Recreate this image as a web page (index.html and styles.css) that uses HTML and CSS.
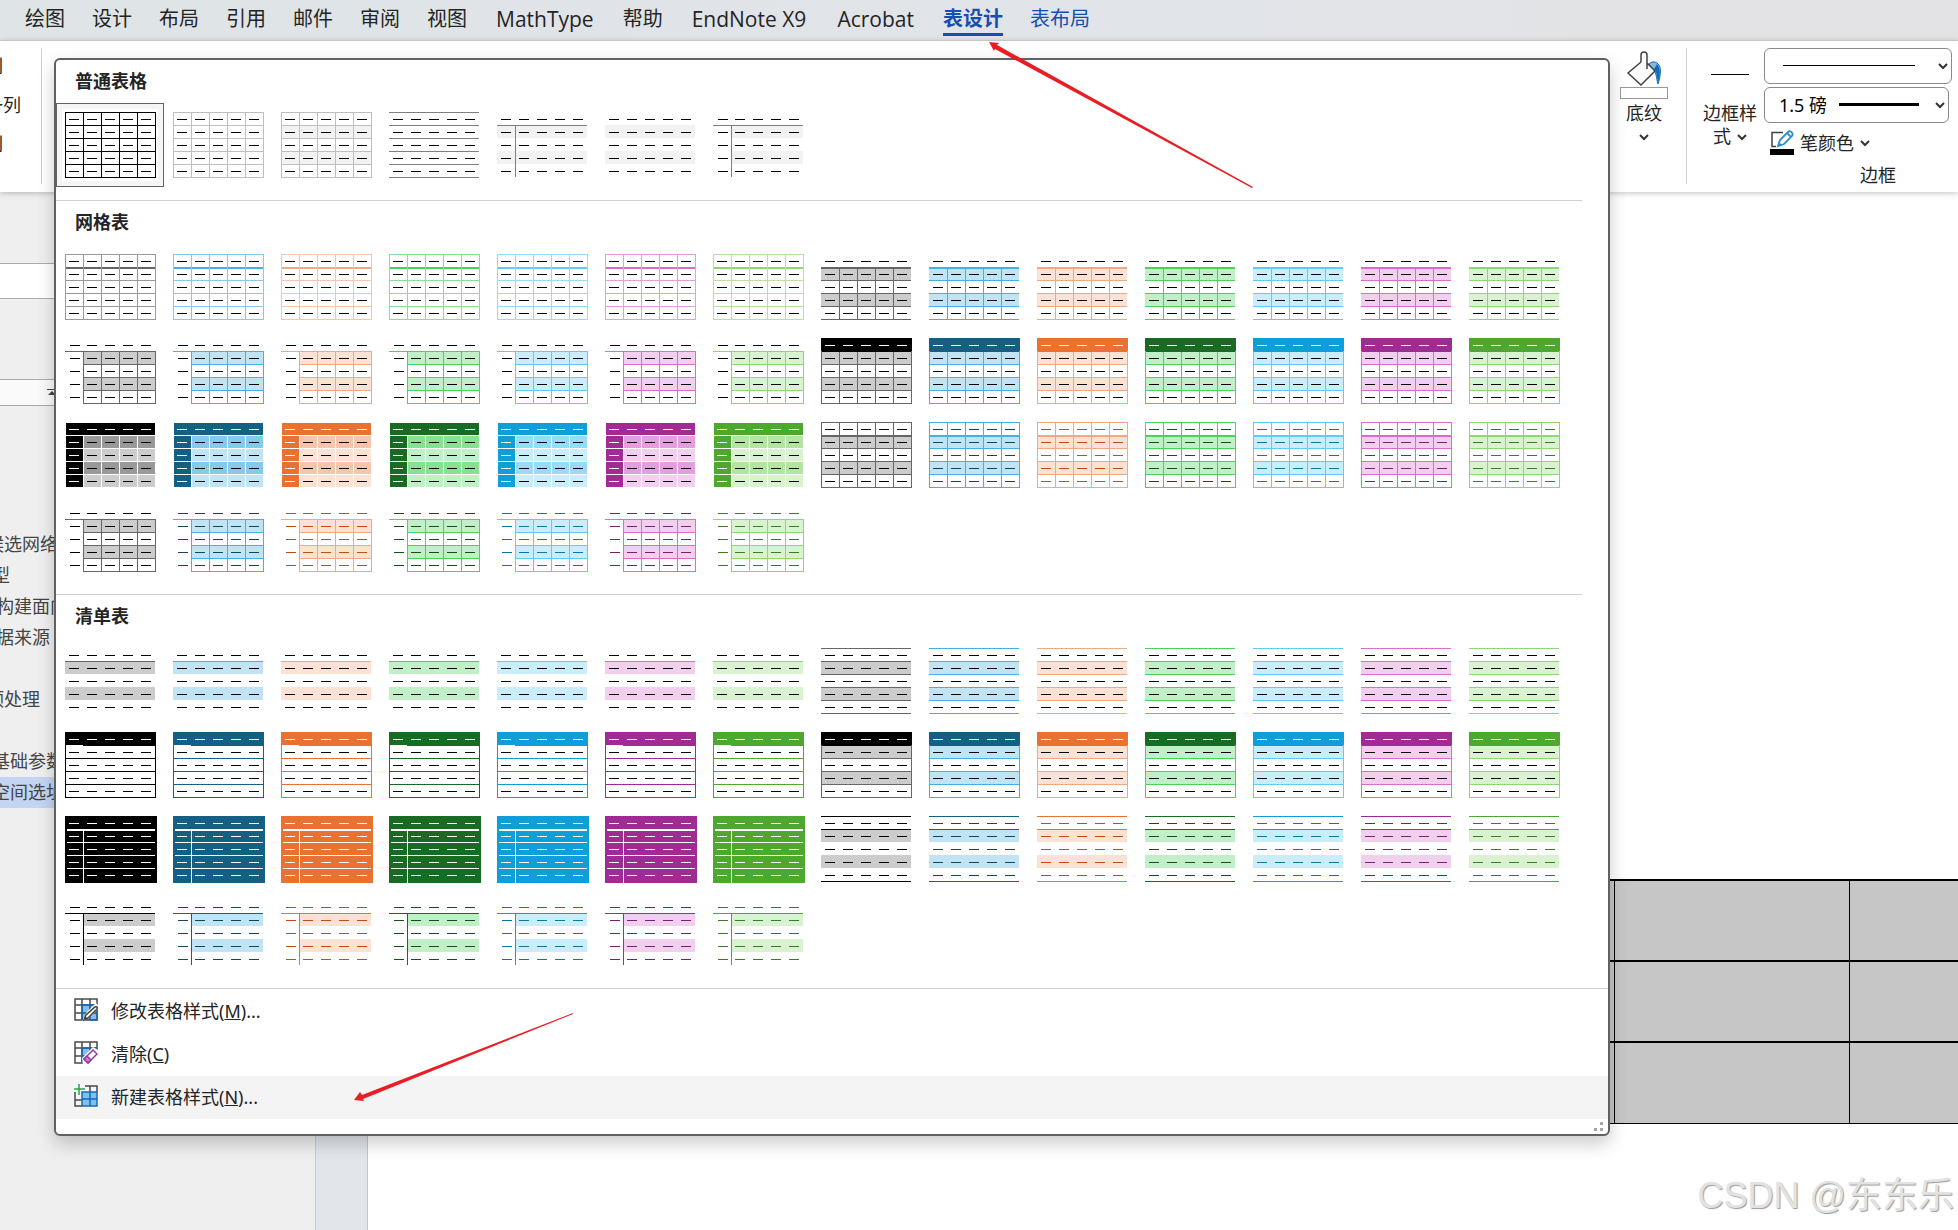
FILE: index.html
```html
<!DOCTYPE html>
<html lang="zh-CN">
<head>
    <meta charset="UTF-8">
    <meta name="viewport" content="width=device-width, initial-scale=1.0">
    <title>表设计</title>
    <link rel="stylesheet" href="styles.css">
</head>
<body>
    <nav class="tabs">
        <a href="#">绘图</a>
        <a href="#">设计</a>
        <a href="#">布局</a>
        <a href="#">引用</a>
        <a href="#">邮件</a>
        <a href="#">审阅</a>
        <a href="#">视图</a>
        <a href="#" class="latin">MathType</a>
        <a href="#">帮助</a>
        <a href="#" class="latin">EndNote X9</a>
        <a href="#" class="latin">Acrobat</a>
        <a href="#" class="context active">表设计</a>
        <a href="#" class="context">表布局</a>
    </nav>

    <header class="ribbon">
        <div class="options">
            <span>列</span>
            <span>一列</span>
            <span>列</span>
        </div>
        <div class="divider"></div>

        <button class="tool shading">
            <svg width="36" height="36" viewBox="0 0 36 36" fill="none">
                <path d="M23 13c4-4 9-2 11 3 1 5 0 11-2 17-2-6-1-11-5-14z" fill="#83b9ea" stroke="#1567b5" stroke-width="1"/>
                <path d="M31 13c4 4 3 12 1 19-1-6-1-11-4-14z" fill="#0f6cbd"/>
                <path d="M15 11 2 22 15 34 29 20 21 12V4a3 3 0 0 0-6 0v7M21 12v6" fill="#fafafa" stroke="#424242" stroke-width="1.500"/>
            </svg>
            <span class="swatch"></span>
            <span>底纹</span>
            <svg class="chevron" width="10" height="8" viewBox="0 0 10 8"><path d="M1 2l4 4 4-4"/></svg>
        </button>
        <div class="divider"></div>

        <button class="tool border-style">
            <span class="line"></span>
            <span>边框样</span>
            <span class="with-chevron">式
                <svg class="chevron" width="10" height="8" viewBox="0 0 10 8"><path d="M1 2l4 4 4-4"/></svg>
            </span>
        </button>

        <div class="border-group">
            <div class="combo">
                <select class="line-type" aria-label="边框线型"><option></option></select>
                <svg class="chevron" width="10" height="8" viewBox="0 0 10 8"><path d="M1 2l4 4 4-4"/></svg>
            </div>
            <div class="combo narrow">
                <select class="line-weight" aria-label="边框粗细"><option>1.5 磅</option></select>
                <svg class="chevron" width="10" height="8" viewBox="0 0 10 8"><path d="M1 2l4 4 4-4"/></svg>
            </div>
            <button class="pen">
                <svg width="24" height="25" viewBox="0 0 24 25" fill="none">
                    <path d="M13 2.500H2v14h4" stroke="#424242" stroke-width="1.500"/>
                    <path d="M8 16l2-6 8-8c2-2 6 1 4 4l-8 8zM17 3l4 4" fill="#fff" stroke="#2b8fd6" stroke-width="1.800"/>
                    <path d="M8 16l1-4 3 3z" fill="#2b8fd6"/>
                    <path d="M0 19h24v6H0z" fill="#000"/>
                </svg>
                笔颜色
                <svg class="chevron" width="10" height="8" viewBox="0 0 10 8"><path d="M1 2l4 4 4-4"/></svg>
            </button>
            <div class="group-name">边框</div>
        </div>
    </header>

    <main class="workspace">
        <aside class="outline">
            <input class="search" type="text" aria-label="搜索文档">
            <button class="jump" aria-label="跳到顶部">
                <svg width="10" height="8" viewBox="0 0 10 8"><path d="M0 0h10v1H0zM5 2l4 4H1z" fill="#444"/></svg>
            </button>
            <ul class="headings">
                <li><a href="#">候选网络</a></li>
                <li class="level-2"><a href="#">型</a></li>
                <li class="level-3"><a href="#">构建面向</a></li>
                <li class="level-3"><a href="#">据来源</a></li>
                <li></li>
                <li><a href="#">预处理</a></li>
                <li></li>
                <li class="level-2"><a href="#">基础参数</a></li>
                <li class="level-2 current"><a href="#">空间选址</a></li>
            </ul>
        </aside>
        <section class="page">
            <table class="doc-table">
                <tr><td></td><td></td><td></td><td></td><td></td><td></td><td></td></tr>
                <tr><td></td><td></td><td></td><td></td><td></td><td></td><td></td></tr>
                <tr><td></td><td></td><td></td><td></td><td></td><td></td><td></td></tr>
            </table>
        </section>
    </main>

    <div class="gallery">
        <section class="group">
            <h2>普通表格</h2>
            <div class="thumbs" id="plain"></div>
        </section>
        <section class="group">
            <h2>网格表</h2>
            <div class="thumbs" id="grid"></div>
        </section>
        <section class="group">
            <h2>清单表</h2>
            <div class="thumbs" id="list"></div>
        </section>
        <div class="menu">
            <button>
                <svg width="24" height="24" viewBox="0 0 24 24" fill="none">
                    <path d="M8 7h14v15H8z" fill="#83beec"/>
                    <path d="M1 1h22v21H1zM1 7h22M1 15h22M8 1v21M16 1v21" stroke="#4a4a4a" stroke-width="1.500"/>
                    <path d="M8 22V7h15M16 22h7V12" stroke="#0f6cbd" stroke-width="1.500"/>
                    <path d="M8 24 12 15 22 5l4 4L15 20z" fill="#fff"/>
                    <path d="M10 22l2-5 9-8c2-1 3 1 2 2l-9 9z" fill="#fff" stroke="#424242" stroke-width="1.500"/>
                    <path d="M10 22l1-4 3 3z" fill="#424242"/>
                </svg>
                <span>修改表格样式(<u>M</u>)...</span>
            </button>
            <button>
                <svg width="24" height="24" viewBox="0 0 24 24" fill="none">
                    <path d="M8 7h14v15H8z" fill="#83beec"/>
                    <path d="M1 1h22v21H1zM1 7h22M1 15h22M8 1v21M16 1v21" stroke="#4a4a4a" stroke-width="1.500"/>
                    <path d="M8 22V7h15" stroke="#0f6cbd" stroke-width="1.500"/>
                    <path d="M8 17 19 6l5 3v15H9z" fill="#fff"/>
                    <path d="M10 18l9-9 4 4-9 9z" fill="#fff" stroke="#9a35a5" stroke-width="1.500"/>
                    <path d="M10 18l3-3 4 4-3 3z" fill="#c583cc" stroke="#9a35a5" stroke-width="1.500"/>
                </svg>
                <span>清除(<u>C</u>)</span>
            </button>
            <button class="hover">
                <svg width="24" height="24" viewBox="0 0 24 24" fill="none">
                    <path d="M11 2h12v6M1 8v14h7M1 16h7M16 2v6" stroke="#4a4a4a" stroke-width="1.500"/>
                    <path d="M8 8h15v14H8zM8 15h15M16 8v14" fill="#83beec" stroke="#0f6cbd" stroke-width="1.500"/>
                    <path d="M5 0v11M0 5h11" stroke="#2f9e4f" stroke-width="1.500"/>
                </svg>
                <span>新建表格样式(<u>N</u>)...</span>
            </button>
        </div>
        <div class="grip">
            <svg width="9" height="9" viewBox="0 0 9 9"><path d="M6 0h3v3H6zM0 6h3v3H0zM6 6h3v3H6z" fill="#a6a6a6"/></svg>
        </div>
    </div>

    <svg class="arrows" width="1260" height="1110" viewBox="0 0 1260 1110" fill="#ec1c24">
        <path d="M989 42 999 43 997 45 1253 187 1252 188 995 49 994 51z"/>
        <path d="M354 1100 360 1092 362 1095 573 1013 573 1014 363 1099 364 1101z"/>
    </svg>

    <div class="watermark">CSDN @东东乐</div>

    <script src="script.js"></script>
</body>
</html>
```
FILE: styles.css
```css
* {
    box-sizing: border-box;
}

body {
    margin: 0;
    min-height: 100vh;
    display: flex;
    flex-direction: column;
    position: relative;
    overflow: hidden;
    font-family: "Noto Sans", "Noto Sans CJK SC", sans-serif;
    font-size: 18px;
    color: #242424;
    background: #fff;
}

a {
    color: inherit;
    text-decoration: none;
}

button {
    font: inherit;
    color: inherit;
    background: none;
    border: none;
    padding: 0;
    cursor: pointer;
}

svg {
    display: block;
    flex: none;
}

.chevron path {
    fill: none;
    stroke: #333;
    stroke-width: 2;
}

/* tab strip */
.tabs {
    display: flex;
    gap: 27px;
    height: 41px;
    padding-left: 25px;
    background: linear-gradient(90deg, #dfe4e7, #e1e4e9 60%, #e3e3e5 85%);
    border-bottom: 1px solid #d4d6d9;
    font-size: 20px;
    line-height: 38px;
    white-space: nowrap;
}

.tabs a {
    height: 36px;
}

.tabs .latin {
    font-family: "Open Sans", sans-serif;
    font-size: 21px;
    padding: 0 2px;
}

.tabs .context {
    color: #174fae;
}

.tabs .active {
    font-weight: bold;
    border-bottom: 3px solid #174fae;
}

/* ribbon */
.ribbon {
    display: flex;
    height: 151px;
    padding: 7px 6px 0 0;
    background: #fff;
    box-shadow: 0 1px 6px rgba(0, 0, 0, 0.25);
    position: relative;
    line-height: 24px;
}

.options {
    display: flex;
    flex-direction: column;
    gap: 15px;
    width: 41px;
    padding-top: 6px;
    text-indent: -15px;
    white-space: nowrap;
}

.divider {
    width: 1px;
    height: 136px;
    background: #d1d1d1;
}

.tool {
    display: flex;
    flex-direction: column;
    align-items: center;
    align-self: flex-start;
}

.shading {
    margin-left: auto;
    margin-right: 18px;
    padding-top: 3px;
}

.swatch {
    width: 48px;
    height: 12px;
    margin-bottom: 2px;
    border: 1px solid #999;
}

.shading .chevron {
    margin-top: 8px;
}

.border-style {
    width: 77px;
    padding: 26px 0 0 9px;
    line-height: 23px;
}

.border-style .line {
    width: 38px;
    height: 1px;
    margin-bottom: 27px;
    background: #000;
}

.with-chevron {
    display: flex;
    align-items: center;
    gap: 6px;
}

.border-group {
    width: 188px;
}

.combo {
    position: relative;
    height: 36px;
    margin-bottom: 3px;
}

.narrow {
    margin-right: 3px;
}

.combo select {
    width: 100%;
    height: 100%;
    appearance: none;
    border: 1px solid #8a8a8a;
    border-radius: 6px;
    padding: 0 14px;
    font: inherit;
    color: #000;
}

.line-type {
    background: linear-gradient(#000, #000) no-repeat 18px 16px / 132px 1px #fff;
}

.line-weight {
    background: linear-gradient(#000, #000) no-repeat 74px 15px / 80px 3px #fff;
}

.combo .chevron {
    position: absolute;
    right: 4px;
    top: 14px;
    pointer-events: none;
}

.pen {
    display: flex;
    align-items: center;
    gap: 6px;
    padding: 3px 0 0 6px;
    height: 30px;
}

.group-name {
    margin-top: 7px;
    padding-left: 96px;
}

/* document area */
.workspace {
    display: flex;
    flex: 1;
    background: #e2e6eb;
}

.outline {
    width: 316px;
    padding-top: 71px;
    background: #efefef;
    border-right: 1px solid #c9cbce;
    overflow: hidden;
}

.search {
    display: block;
    width: 100%;
    height: 36px;
    border: 1px solid #ababab;
    border-width: 1px 0;
    background: #fff;
}

.jump {
    display: flex;
    align-items: center;
    width: 100%;
    height: 27px;
    margin-top: 80px;
    padding-left: 47px;
    background: #fafafa;
    border: 1px solid #ababab;
    border-width: 1px 0;
}

.headings {
    list-style: none;
    margin: 123px 0 0;
    padding: 0;
    line-height: 31px;
    color: #444;
}

.headings li {
    height: 31px;
    text-indent: -14px;
}

.headings .level-2 {
    text-indent: -8px;
}

.headings .level-3 {
    text-indent: -4px;
}

.headings .current {
    background: #c3d5f2;
}

.page {
    flex: 1;
    margin-left: 51px;
    padding: 687px 0 0 71px;
    background: #fff;
    border-left: 1px solid #c4c6c9;
    overflow: hidden;
}

.doc-table {
    width: 100%;
    table-layout: fixed;
    border-collapse: collapse;
    border-bottom: 1px solid #000;
}

.doc-table td {
    width: 235px;
    height: 81px;
    padding: 0;
    background: #c6c6c6;
    border-left: 1px solid #000;
    border-top: 2px solid #000;
}

.doc-table td:last-child {
    width: auto;
}

/* table style gallery */
.gallery {
    position: absolute;
    z-index: 2;
    top: 58px;
    left: 54px;
    right: 348px;
    background: #fff;
    border: 2px solid #616161;
    border-radius: 6px;
    box-shadow: 0 8px 18px rgba(0, 0, 0, 0.2);
}

.group {
    margin-right: 26px;
    padding-bottom: 13px;
    border-bottom: 1px solid #d1d1d1;
}

.group:nth-child(3) {
    margin-right: 0;
}

.group h2 {
    margin: 0;
    padding: 0 19px 2px;
    font-size: 18px;
    line-height: 42px;
}

.group:first-child h2 {
    padding-bottom: 1px;
}

.thumbs {
    display: grid;
    grid-template-columns: repeat(auto-fill, 108px);
}

.thumbs button {
    height: 84px;
    padding: 8px;
    border: 1px solid transparent;
}

.thumbs .selected {
    border-color: #616161;
    background: #fff;
    box-shadow: inset 0 0 0 5px #f5f5f5;
}

.menu {
    padding-top: 1px;
}

.menu button {
    display: flex;
    align-items: center;
    gap: 13px;
    width: 100%;
    height: 43px;
    padding: 0 0 3px 18px;
    text-align: left;
}

.menu .hover {
    background: #f4f4f4;
}

.grip {
    display: flex;
    justify-content: flex-end;
    height: 15px;
    padding: 3px 5px;
}

/* overlays */
.arrows {
    position: absolute;
    z-index: 3;
    top: 0;
    left: 0;
    pointer-events: none;
}

.watermark {
    position: absolute;
    right: 4px;
    bottom: 6px;
    font-family: "Liberation Sans", "Noto Sans CJK SC", sans-serif;
    font-size: 36px;
    line-height: 56px;
    color: #e2e2e2;
    text-shadow: 1px 1px 1px #999;
}
```
FILE: script.js
```javascript
const palettes = [
    { accent: '#000000', mid: '#666666', light: '#999999', band: '#cccccc', text: '#000000' },
    { accent: '#156082', mid: '#45b0e1', light: '#83caeb', band: '#c1e4f5', text: '#0f4761' },
    { accent: '#e97132', mid: '#f1a983', light: '#f6c5ac', band: '#fbe2d5', text: '#bf4e14' },
    { accent: '#196b24', mid: '#47d459', light: '#84e291', band: '#c1f0c8', text: '#124f1a' },
    { accent: '#0f9ed5', mid: '#60cbf3', light: '#95dcf7', band: '#caedfb', text: '#0b769f' },
    { accent: '#a02b93', mid: '#d86dcb', light: '#e49edd', band: '#f2ceef', text: '#77206d' },
    { accent: '#4ea72e', mid: '#8dd873', light: '#b3e5a1', band: '#d9f2d0', text: '#3a7c22' }
];

// every thumbnail is 5x5 cells, each cell 18x13
const rect = (x, y, w, h, color) => `<rect x="${x}" y="${y}" width="${w}" height="${h}" fill="${color}"/>`;
const hline = (row, color, x = 0, w = 90) => rect(x, row * 13, w, 1, color);
const vline = (col, color, y = 0, h = 66) => rect(col * 18, y, 1, h, color);

function hlines(from, color, x = 0, w = 90) {
    let out = '';
    for (let r = from; r <= 5; r++) out += hline(r, color, x, w);
    return out;
}

function vlines(from, to, color, y = 0) {
    let out = '';
    for (let c = from; c <= to; c++) out += vline(c, color, y, 66 - y);
    return out;
}

function bands(color, x = 0) {
    return rect(x, 13, 90 - x, 13, color) + rect(x, 39, 90 - x, 13, color);
}

function dashes(color, header = color, first = color, shift = 0) {
    let out = '';
    for (let r = 0; r < 5; r++) {
        for (let c = 0; c < 5; c++) {
            const fill = r === 0 ? header : c === 0 ? first : color;
            out += rect(c * 18 + 4 + (c === 0 ? shift : 0), r * 13 + 7, 10, 1, fill);
        }
    }
    return out;
}

const plain = [
    () => hlines(0, '#000', 0, 91) + vlines(0, 5, '#000') + dashes('#000'),
    () => hlines(0, '#bfbfbf', 0, 91) + vlines(0, 5, '#bfbfbf') + dashes('#000'),
    () => bands('#f2f2f2') + hlines(0, '#bfbfbf', 0, 91) + vlines(0, 5, '#bfbfbf') + dashes('#000'),
    () => hlines(0, '#7f7f7f') + dashes('#000'),
    () => bands('#f2f2f2') + hline(1, '#7f7f7f') + vline(1, '#7f7f7f', 13, 52) + dashes('#000'),
    () => bands('#f2f2f2') + dashes('#000'),
    () => bands('#f2f2f2', 18) + hline(1, '#7f7f7f') + vline(1, '#7f7f7f', 13, 52) + dashes('#000', '#000', '#000', 1)
];

const openGrid = (p, text) => bands(p.band, 18) + hline(1, p.mid) + hlines(1, p.mid, 18, 73) +
    vlines(1, 5, p.mid, 13) + dashes(text, text, text, 1);

function darkGrid(p) {
    let out = rect(1, 1, 89, 12, p.accent);
    for (let r = 1; r < 5; r++) {
        out += rect(1, r * 13 + 1, 17, 12, p.accent);
        for (let c = 1; c < 5; c++) {
            out += rect(c * 18 + 1, r * 13 + 1, 17, 12, r % 2 ? p.light : p.band);
        }
    }
    return out + dashes('#000', '#fff', '#fff');
}

const grid = [
    p => hlines(0, p.light, 0, 91) + rect(1, 13, 89, 2, p.mid) + vlines(0, 5, p.light) + dashes('#000'),
    p => bands(p.band) + hlines(1, p.mid) + rect(0, 13, 90, 2, p.mid) + vlines(1, 4, p.mid, 13) + dashes('#000'),
    p => openGrid(p, '#000'),
    p => bands(p.band) + hlines(1, p.mid, 0, 91) + vlines(0, 5, p.mid, 13) +
        rect(0, 0, 91, 13, p.accent) + rect(1, 13, 89, 1, p.accent) + dashes('#000', '#fff'),
    darkGrid,
    p => bands(p.band) + hlines(0, p.mid, 0, 91) + rect(0, 13, 91, 2, p.mid) + vlines(0, 5, p.mid) + dashes(p.text),
    p => openGrid(p, p.text)
];

const list = [
    p => bands(p.band) + hline(1, p.mid) + dashes('#000'),
    p => bands(p.band) + hlines(0, p.mid) + dashes('#000'),
    p => hlines(2, p.accent, 0, 91) + vline(0, p.accent) + vline(5, p.accent) +
        rect(0, 0, 91, 13, p.accent) + rect(18, 13, 73, 1, p.accent) + dashes('#000', '#fff'),
    p => bands(p.band) + hlines(2, p.mid, 0, 91) + vline(0, p.mid) + vline(5, p.mid) +
        rect(0, 0, 91, 13, p.accent) + rect(1, 13, 89, 1, p.accent) + dashes('#000', '#fff'),
    p => rect(0, 0, 92, 67, p.accent) + rect(2, 13, 88, 2, '#fff') + hline(2, '#fff', 2, 88) +
        hline(3, '#fff', 2, 88) + hline(4, '#fff', 2, 88) + vline(1, '#fff', 15, 52) + dashes('#fff'),
    p => bands(p.band) + hline(0, p.accent) + hline(1, p.accent) + hline(5, p.accent) + dashes(p.text),
    p => bands(p.band, 18) + hline(1, p.accent) + vline(1, p.accent, 13, 52) + dashes(p.text, p.text, p.text, 1)
];

function addThumb(box, drawing, label) {
    const button = document.createElement('button');
    button.setAttribute('aria-label', label);
    button.innerHTML = `<svg width="92" height="67" viewBox="0 0 92 67" shape-rendering="crispEdges">${drawing}</svg>`;
    box.appendChild(button);
    return button;
}

const plainBox = document.getElementById('plain');
plain.forEach((draw, i) => addThumb(plainBox, draw(), `普通表格 ${i + 1}`));
plainBox.firstChild.classList.add('selected');

function fill(id, styles, name) {
    const box = document.getElementById(id);
    styles.forEach((draw, i) => {
        palettes.forEach(p => addThumb(box, draw(p), `${name} ${i + 1}`));
    });
}

fill('grid', grid, '网格表');
fill('list', list, '清单表');
```
